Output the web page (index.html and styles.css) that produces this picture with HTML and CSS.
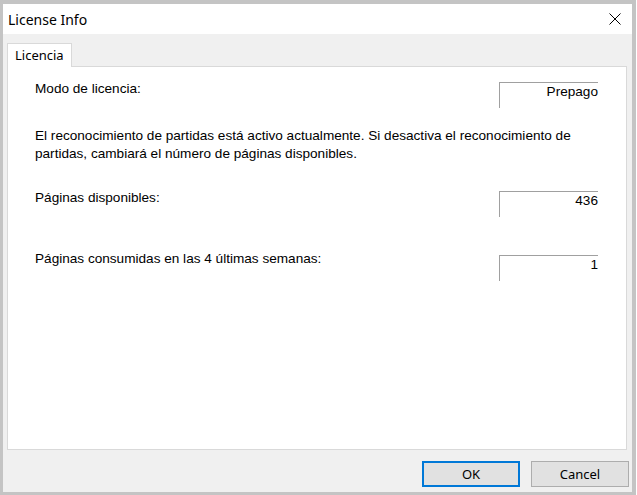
FILE: index.html
```html
<!DOCTYPE html>
<html lang="es">
<head>
<meta charset="utf-8">
<title>License Info</title>
<link rel="stylesheet" href="styles.css">
</head>
<body>
<div class="window">
  <div class="titlebar">
    <span class="title">License Info</span>
    <span class="close" aria-label="Cerrar">
      <svg width="12" height="12" viewBox="0 0 12 12"><path d="M0.5 0.5 L11.5 11.5 M11.5 0.5 L0.5 11.5" stroke="#000" stroke-width="1" fill="none"/></svg>
    </span>
  </div>
  <div class="client">
    <div class="tabs">
      <div class="tab">Licencia</div>
    </div>
    <div class="panel">
      <div class="row row1">
        <div class="label">Modo de licencia:</div>
        <div class="field">Prepago</div>
      </div>
      <p class="note">El reconocimiento de partidas está activo actualmente. Si desactiva el reconocimiento de partidas, cambiará el número de páginas disponibles.</p>
      <div class="row row3">
        <div class="label">Páginas disponibles:</div>
        <div class="field">436</div>
      </div>
      <div class="row row4">
        <div class="label">Páginas consumidas en las 4 últimas semanas:</div>
        <div class="field field-low">1</div>
      </div>
    </div>
    <div class="buttons">
      <button class="btn btn-default">OK</button>
      <button class="btn">Cancel</button>
    </div>
  </div>
</div>
</body>
</html>
```
FILE: styles.css
```css
html, body {
  margin: 0;
  padding: 0;
  background: #ffffff;
}
body {
  width: 637px;
  height: 495px;
  overflow: hidden;
}
.window {
  box-sizing: border-box;
  width: 636px;
  height: 495px;
  border-style: solid;
  border-color: #c4c4c4;
  border-width: 4px 4px 3px 3px;
  display: flex;
  flex-direction: column;
  background: #f0f0f0;
}
.titlebar {
  height: 30px;
  background: #ffffff;
  display: flex;
  align-items: center;
  justify-content: space-between;
  padding: 0 11px 0 5px;
  flex: none;
}
.title {
  font-family: "Noto Sans", "Open Sans", sans-serif;
  font-size: 14px;
  color: #000;
}
.close {
  display: flex;
  width: 12px;
  height: 12px;
}
.client {
  flex: 1;
  display: flex;
  flex-direction: column;
  padding: 9px 5px 5px 4px;
  min-height: 0;
}
.tabs {
  display: flex;
  height: 23px;
  flex: none;
  position: relative;
  z-index: 1;
}
.tab {
  box-sizing: border-box;
  width: 65px;
  height: 24px;
  background: #fff;
  border: 1px solid #d9d9d9;
  border-bottom: none;
  font-family: "Noto Sans", "Open Sans", sans-serif;
  font-size: 13px;
  color: #000;
  padding-left: 7px;
  line-height: 22px;
}
.panel {
  box-sizing: border-box;
  height: 384px;
  background: #fff;
  border: 1px solid #d9d9d9;
  padding: 13px 28px 0 27px;
  font-family: "Liberation Sans", Arial, sans-serif;
  font-size: 13.6px;
  color: #000;
  flex: none;
}
.row {
  display: flex;
  justify-content: space-between;
  align-items: flex-start;
}
.label {
  line-height: 18px;
}
.field {
  box-sizing: border-box;
  width: 99px;
  height: 26px;
  margin-top: 2px;
  border-top: 1px solid #a0a0a0;
  border-left: 1px solid #a0a0a0;
  text-align: right;
  padding: 1px 0 0 0;
  line-height: 16px;
}
.field-low {
  margin-top: 5px;
}
.note {
  margin: 19px 0 0 0;
  line-height: 18px;
}
.row3 {
  margin-top: 26px;
}
.row4 {
  margin-top: 33px;
}
.buttons {
  display: flex;
  justify-content: flex-end;
  gap: 11px;
  margin-top: 11px;
  margin-right: -2px;
}
.btn {
  box-sizing: border-box;
  width: 98px;
  height: 26px;
  background: #e1e1e1;
  border: 1px solid #adadad;
  font-family: "Noto Sans", "Open Sans", sans-serif;
  font-size: 13px;
  color: #000;
  padding: 0;
  margin: 0;
}
.btn-default {
  border: 2px solid #0078d7;
}
```
